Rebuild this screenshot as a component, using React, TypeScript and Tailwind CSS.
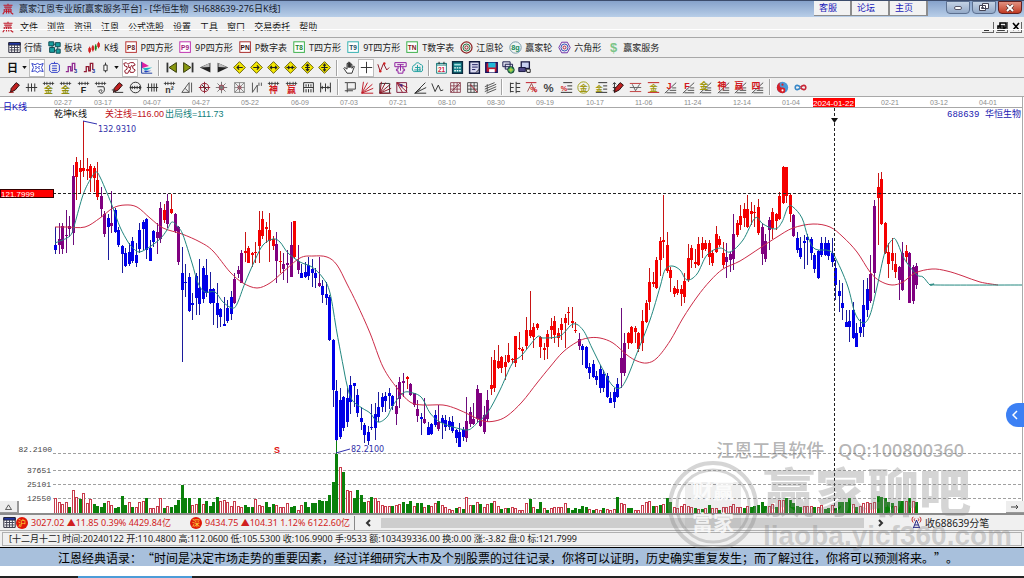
import type { ReactNode } from "react";

const SANS = "font-['Noto_Sans','Noto_Sans_CJK_SC',sans-serif]";

const CANDLES = `
b227,245,250,254 p223,239,245,254 p223,226,249,254 p210,235,236,253 p216,226,229,237 p165,176,233,245 r157,162,177,200 r160,168,172,193
r121,168,171,177 r158,169,171,180 r164,166,178,192 r166,168,178,192 r162,180,197,200 p187,196,209,217 p211,214,234,237 b214,218,227,260
p191,223,226,233 b208,210,232,233 b227,230,245,247 b245,246,254,273 b248,253,266,267 b243,252,264,266 b237,241,261,263 b243,255,263,267
b223,230,249,253 b220,222,229,250 b218,219,250,259 b240,248,261,261 b230,231,242,247 p223,232,238,254 p202,208,239,243 r204,210,220,223
p194,201,224,228 r194,209,213,214 p213,214,231,233 p226,227,262,265 b247,273,290,362 b264,282,283,297 b273,277,311,312 b293,303,305,320
b273,276,298,315 b259,288,304,315 b266,268,299,303 b259,275,293,297 b272,289,303,304 b288,289,303,325 b283,303,315,328 b308,309,317,327
b297,324,326,326 b300,308,321,323 b291,297,314,320 p273,279,303,304 p266,270,274,278 p250,253,283,283 r232,251,253,262 r246,248,263,263
r252,253,255,267 r242,252,253,263 r211,230,246,263 r211,219,236,239 r222,227,229,243 r213,230,241,262 r236,239,246,250 p232,244,261,283
r251,261,262,273 p253,264,269,280 p250,263,265,283 p222,245,277,277 r221,221,257,258 p245,261,270,274 b264,273,278,278 b262,272,277,278
b257,265,276,280 b259,269,273,287 b268,273,278,288 p257,283,286,287 b280,286,295,303 b282,294,298,305 b295,297,340,341 b339,340,390,407
b380,391,440,441 b388,400,437,439 b396,397,428,431 b388,398,422,427 b376,385,402,414 b383,383,386,407 b389,395,413,417 b407,418,422,430
b423,425,435,443 b426,432,441,445 b404,427,428,430 b403,414,428,440 b392,407,417,422 b393,397,407,412 b392,396,401,412 b388,393,396,409
b395,396,406,410 p385,406,414,425 p377,382,399,408 p373,381,383,397 r376,377,379,389 p383,384,395,396 p393,393,405,407 p400,409,416,422
b413,417,419,435 p398,419,423,424 b422,427,435,435 b423,424,434,435 b410,415,425,427 p405,422,429,431 b415,418,423,439 b415,420,427,431
b417,421,427,430 b416,422,431,433 b429,430,438,443 b423,432,447,447 b427,430,437,441 p397,421,438,442 p407,412,424,427 p403,419,424,425
p385,389,419,422 p393,393,426,427 p406,415,432,434 p390,400,419,422 r357,385,389,395 r350,360,388,392 r345,361,368,369 r356,357,368,373
r355,362,367,380 r343,355,362,363 r358,359,360,363 r336,336,363,367 r332,348,349,350 r347,349,351,360 r317,330,346,350 r291,330,336,338
r323,327,337,348 r323,324,328,330 r336,337,347,358 r343,348,350,360 r330,334,347,359 r318,326,330,339 r316,321,335,343 r328,333,338,347
r318,324,330,340 r314,318,323,348 r307,312,313,325 r307,321,323,328 r322,330,331,333 p333,339,346,350 b344,346,350,365 b346,347,368,369
b363,367,373,379 b360,364,377,378 b371,376,380,385 b365,369,388,393 b370,374,388,392 b373,376,397,398 b392,398,403,403 b388,392,402,408
b378,384,397,398 p308,358,373,388 p333,343,373,376 r332,333,343,349 r326,327,343,344 r326,328,332,343 r332,333,349,352 r310,321,343,351
r300,303,322,323 r268,282,302,310 r272,282,284,287 r257,260,288,289 r237,241,260,276 r195,240,242,258 r232,245,271,273 r267,270,278,292
r286,288,294,297 r280,289,293,295 r285,289,294,306 r273,281,297,303 r244,258,280,282 r245,248,260,268 r249,262,264,268 r237,244,265,266
r237,243,250,258 r240,243,249,251 r240,243,257,265 r250,253,263,266 r226,234,252,253 r236,239,245,247 r242,253,265,268 p243,257,262,278
p252,254,260,272 p214,234,259,270 r220,223,235,237 r205,216,225,230 r203,209,218,227 r195,209,227,228 r202,211,214,225 r205,212,213,227
r199,207,233,235 p223,227,254,265 p234,241,259,262 p217,220,230,250 r208,212,228,239 r213,214,221,230 r192,196,219,220 r166,167,203,204
r167,167,196,203 r194,195,214,222 p214,215,236,237 b232,238,250,253 b237,248,257,259 b235,241,243,269 b234,237,240,265 b237,239,253,260
b253,255,269,273 b250,251,278,279 b237,243,255,257 b237,243,255,256 b240,243,256,260 b238,253,262,267 b260,268,285,300 b280,291,296,312
b283,303,308,320 b310,322,327,327 b310,321,327,342 b302,310,338,339 b323,333,347,347 b319,327,333,337 b280,305,327,337 b278,289,310,317
p255,274,301,303 p200,206,273,293 r173,187,198,245 r172,179,224,225 r222,223,253,254 r243,252,264,278 r238,253,261,270 r253,264,272,278
p266,267,280,300 p242,253,290,291 r245,251,257,262 p252,253,303,303 p265,267,301,304 p263,266,285,289`;

const VOLUME = `
r15 r11 r9 r11 g6 r23 r16 g14 r20 r10 r14 g9 g7 g6 g10 r12 r8 g5 g6 g17 g8 r11 g6 r6 r11 r12 g15 r5 r5 r7 r15 g5 r7 g6 g8 g13 g28 g15 g15 r8
r9 g15 r9 g12 g7 g11 g16 r12 r13 r11 r7 r12 r7 r6 g8 g6 g6 r14 r8 r7 g11 g6 g9 r8 r6 r6 r10 g6 g7 r3 r8 g11 g6 g10 g10 g13 g12 g12 g18 g31
g59 r46 g41 r23 r22 g15 g23 g18 g11 r12 g16 r15 r12 r8 r7 r7 g7 r8 r9 g11 g9 g12 r7 g10 g10 r6 g8 r7 r10 g12 r8 r6 r4 r3 g5 r6 g4 r16 r8 g8
r11 g9 r6 r9 g10 r12 r7 g4 r5 g5 r6 r5 r3 r3 r10 g14 r6 g4 g11 r5 g3 r5 r6 r6 r6 r10 g5 g3 g5 g4 g7 g6 r4 g3 r4 r3 g5 r4 r3 r4
g16 r10 r9 g5 g5 r3 r3 r8 r11 r12 g7 r7 g8 r9 g15 g11 r6 r5 r7 r9 r7 r6 g5 r4 g4 r5 g8 r5 r5 g3 r6 r6 r7 r9 r6 r6 g5 r7 g6 g7
g8 g11 g7 r7 r9 g6 r13 r13 g15 g13 g10 g7 g6 r7 r7 r7 g6 r6 r8 g4 g5 r8 g5 g11 g11 g11 g15 r9 g6 r7 r10 r11 r10 r11 g17 g16 g15 g11 g10 r7
g12 g12 r12 g15 r12 g11`;

const SLOW_LINE =
  "55,227 67,227 85,227 100,218 113,208 125,205 137,207 150,218 163,228 182,234 200,242 213,251 230,272 243,283 257,288 270,283 283,272 300,258 313,256 327,257 337,265 347,284 357,304 370,333 383,367 397,388 410,402 423,405 443,405 457,409 470,415 483,421 495,421 507,416 522,402 537,383 550,367 563,352 577,342 588,338 600,338 613,343 627,355 637,361 647,363 657,358 670,341 683,318 697,297 710,281 723,269 740,261 760,248 777,237 793,228 813,224 830,227 843,237 857,252 870,272 880,281 892,285 903,282 915,273 932,269 947,271 963,276 980,282 998,285";
const FAST_LINE =
  "55,243 67,238 72,233 75,223 83,195 90,180 96,172 100,177 107,193 113,208 120,227 128,242 133,248 139,252 148,248 160,239 167,230 172,222 178,227 183,235 192,263 198,283 205,292 215,292 223,302 232,308 237,304 245,283 255,260 263,245 273,239 280,242 288,253 300,262 312,267 323,278 330,293 337,333 343,365 347,385 352,400 362,408 370,413 378,422 387,417 392,407 403,393 413,393 422,398 430,413 440,422 453,427 467,430 473,427 477,423 488,412 500,390 512,364 522,355 537,337 543,338 560,336 573,324 583,330 592,348 602,368 612,385 620,388 627,378 637,353 650,320 660,287 665,270 672,266 680,270 687,280 697,274 707,255 720,248 730,252 743,240 755,218 763,224 775,229 782,222 788,207 793,207 802,218 808,237 815,249 830,251 838,263 848,287 855,313 863,323 870,315 877,287 885,252 893,239 897,242 902,254 907,263 917,275 923,277 930,285 934,284 937,285 1022,285";

const DATES: [number, string][] = [
  [54, "02-27"], [94, "03-17"], [143, "04-07"], [192, "04-27"], [241, "05-22"], [291, "06-09"], [340, "07-03"],
  [389, "07-21"], [438, "08-10"], [487, "08-30"], [536, "09-19"], [586, "10-17"], [635, "11-06"], [684, "11-24"],
  [733, "12-14"], [782, "01-04"], [881, "02-21"], [930, "03-12"], [979, "04-01"],
];

const CANDLE_COLOR: Record<string, string> = { r: "#f50000", b: "#0000e8", p: "#800080" };
const WICK_COLOR: Record<string, string> = { r: "#c81414", b: "#1c1c9c", p: "#6c0c7c" };

const barX = (index: number) => Math.round(55 + index * 3.515);

function smooth(points: string) {
  const p = points.split(" ").map((pair) => pair.split(",").map(Number));
  let d = `M${p[0][0]} ${p[0][1]}`;
  for (let i = 0; i < p.length - 1; i++) {
    const a = p[i - 1] ?? p[i];
    const b = p[i];
    const c = p[i + 1];
    const e = p[i + 2] ?? c;
    d += `C${b[0] + (c[0] - a[0]) / 6} ${b[1] + (c[1] - a[1]) / 6} ${c[0] - (e[0] - b[0]) / 6} ${c[1] - (e[1] - b[1]) / 6} ${c[0]} ${c[1]}`;
  }
  return d;
}

function Chart() {
  return (
    <svg viewBox="0 97 1024 416" className="block h-auto w-full bg-white" role="img" aria-label="华恒生物 日K线">
      <path d="M0 107.5H1022" stroke="#a8a8a8" />
      <g fill="#8c8c8c" className="font-['Liberation_Sans',sans-serif] text-[7px]">
        {DATES.map(([x, label]) => (
          <text key={label} x={x} y="105">{label}</text>
        ))}
      </g>
      <g stroke="#a0a0a0" strokeDasharray="3 2" shapeRendering="crispEdges">
        <path d="M53 453.5H1022M53 470.5H1022M53 484.5H1022M53 498.5H1022" />
      </g>

      <g shapeRendering="crispEdges">
        {VOLUME.trim().split(/\s+/).map((bar, i) => {
          const h = Number(bar.slice(1));
          return bar[0] === "g" ? (
            <rect key={i} x={barX(i) - 1} y={513 - h} width="3" height={h} fill="#0a800a" />
          ) : (
            <rect key={i} x={barX(i) - 0.5} y={513.5 - h} width="2" height={h} fill="#fff" stroke="#c83c4c" />
          );
        })}
        {CANDLES.trim().split(/\s+/).map((candle, i) => {
          const [high, top, bottom, low] = candle.slice(1).split(",").map(Number);
          const x = barX(i);
          return (
            <g key={i}>
              <rect x={x} y={high} width="1" height={low - high} fill={WICK_COLOR[candle[0]]} />
              <rect x={x - 1} y={top} width="3" height={Math.max(1, bottom - top)} fill={CANDLE_COLOR[candle[0]]} />
            </g>
          );
        })}
        <path d="M336.5 441V454" stroke="#0a800a" />
      </g>
      <path d={smooth(SLOW_LINE)} fill="none" stroke="#cc2c48" />
      <path d={smooth(FAST_LINE)} fill="none" stroke="#22877f" />

      <path d="M53 193.5H1022M834.5 108V513" stroke="#222" strokeDasharray="3 2" shapeRendering="crispEdges" />
      <path d="M831 118h7l-3.500 5z" fill="#111" />
      <rect x="813" y="98" width="42" height="9" fill="#f00" />
      <rect x="0.500" y="189.500" width="53" height="8" fill="#f00" stroke="#300" />
      <path d="M83 121l14 3M336 453l14-4" stroke="#3030b0" fill="none" />

      <g fill="#fff" className="font-['Liberation_Sans',sans-serif] text-[8px]">
        <text x="813" y="106">2024-01-22</text>
        <text x="1" y="197">121.7999</text>
      </g>
      <g fill="#3030a8" className="font-['DejaVu_Sans',sans-serif] text-[8px]">
        <text x="98" y="132">132.9310</text>
        <text x="351" y="452">82.2100</text>
      </g>
      <g fill="#444" textAnchor="end" className="font-['Liberation_Mono',monospace] text-[8px]">
        <text x="52" y="452">82.2100</text>
        <text x="51" y="473">37651</text>
        <text x="51" y="487">25101</text>
        <text x="51" y="501">12550</text>
      </g>
      <g className="font-['Liberation_Sans','Noto_Sans_CJK_SC',sans-serif] text-[9px]">
        <text x="3" y="110" fill="#1010c0">日K线</text>
        <text x="54" y="117" fill="#111">乾坤K线</text>
        <text x="105" y="117" fill="#c01020">关注线=116.00</text>
        <text x="165" y="117" fill="#10807c">出局线=111.73</text>
        <text x="274" y="453" fill="#e01010" fontWeight="bold">S</text>
      </g>
      <g fill="#2020b0" className="font-['Liberation_Mono','Noto_Sans_CJK_SC',monospace] text-[9px]">
        <text x="947" y="117">688639</text>
        <text x="985" y="117">华恒生物</text>
      </g>
      <path d="M1022.500 97V513" stroke="#aaa" />
    </svg>
  );
}

function Glyph({ children }: { children: ReactNode }) {
  return (
    <svg viewBox="0 0 16 16" className="h-[13px] w-[13px] shrink-0" fill="none" stroke="#333" strokeWidth="1.200" aria-hidden="true">
      {children}
    </svg>
  );
}

function Char({ x = 8, y, size = 9, fill, children }: { x?: number; y: number; size?: number; fill: string; children: string }) {
  return (
    <text x={x} y={y} fontSize={size} fill={fill} stroke="none" fontWeight="bold" textAnchor="middle" fontFamily="'Liberation Sans','Noto Sans CJK SC',sans-serif">
      {children}
    </text>
  );
}

function Logo() {
  return (
    <svg viewBox="0 0 16 16" className="h-[12px] w-[12px] shrink-0" fill="none" stroke="#c01828" strokeWidth="1.500" aria-hidden="true">
      <path d="M2 3h12M8 1v2M3 5.500h10M4 8h8M3 8v4l-2 3M6 8v6M9 8v6M12 8v5l3 2M4 11h8" />
    </svg>
  );
}

function Boxed({ label, color, ink }: { label: string; color: string; ink: string }) {
  return (
    <Glyph>
      <rect x="1" y="1" width="13" height="13" stroke={color} fill="#fff" />
      <Char x={7.5} y={11} size={8} fill={ink}>{label}</Char>
    </Glyph>
  );
}

const TableIcon = (
  <Glyph>
    <path d="M1 2h14v12H1z" fill="#fff" stroke="#223" />
    <path d="M1 2h14v3H1z" fill="#2038b0" stroke="#223" />
    <path d="M2 8h12M2 11h12M4.500 5v9M8 5v9M11.500 5v9" stroke="#445" />
  </Glyph>
);

const FEATURES: { label: string; icon: ReactNode }[] = [
  { label: "行情", icon: TableIcon },
  {
    label: "板块",
    icon: (
      <Glyph>
        <path d="M1 1h6v5H1zM9 2h6v5H9zM2 8h6v6H2zM10 10h5v5h-5z" fill="#18a0a0" stroke="#114c54" />
        <path d="M7 4h3M12 7v3M5 6v3M8 12h2" stroke="#114c54" />
      </Glyph>
    ),
  },
  {
    label: "K线",
    icon: (
      <Glyph>
        <path d="M2 7v8M6 5v8M13 1v8" stroke="#d02020" />
        <path d="M9.500 4v8" stroke="#188018" />
        <path d="M1 9h2v4H1zM5 7h2v4H5zM12 3h2v4h-2z" fill="#e02020" stroke="#d02020" />
        <path d="M9 6h1v4H9z" fill="#20a020" stroke="#188018" />
      </Glyph>
    ),
  },
  { label: "P四方形", icon: <Boxed label="P8" color="#b83030" ink="#602020" /> },
  { label: "9P四方形", icon: <Boxed label="P9" color="#c030b0" ink="#a02080" /> },
  { label: "P数字表", icon: <Boxed label="PN" color="#a82828" ink="#301010" /> },
  { label: "T四方形", icon: <Boxed label="T8" color="#38b048" ink="#208030" /> },
  { label: "9T四方形", icon: <Boxed label="T9" color="#30b0b0" ink="#204c60" /> },
  { label: "T数字表", icon: <Boxed label="TN" color="#38b048" ink="#801818" /> },
  {
    label: "江恩轮",
    icon: (
      <Glyph>
        <circle cx="8" cy="8" r="6.800" stroke="#8c2020" strokeWidth="1.500" />
        <circle cx="8" cy="8" r="4.300" stroke="#207040" />
        <circle cx="8" cy="8" r="2" stroke="#902020" />
      </Glyph>
    ),
  },
  {
    label: "赢家轮",
    icon: (
      <Glyph>
        <circle cx="8" cy="8" r="7" stroke="#7898a8" fill="#eef6f4" />
        <Char y={11} size={9} fill="#188858">8g</Char>
      </Glyph>
    ),
  },
  {
    label: "六角形",
    icon: (
      <Glyph>
        <path d="M4.500 1.500h7L15 8l-3.500 6.500h-7L1 8z" stroke="#7030a8" />
        <circle cx="8" cy="8" r="4.300" stroke="#3050b8" />
        <circle cx="8" cy="8" r="1.800" stroke="#b02040" />
      </Glyph>
    ),
  },
  { label: "赢家服务", icon: <Glyph><Char y={14} size={16} fill="#7cc488">$</Char></Glyph> },
];

const candleBars = (tone: string) => (
  <Glyph>
    <path d="M1 13h3V7h3v5h2V3h3v8" stroke={tone} strokeWidth="1.600" />
    <Char x={13} y={15} size={7} fill="#203090">3</Char>
  </Glyph>
);

const diamond = (arrows: string) => (
  <Glyph>
    <path d="M8 .8L15.200 8 8 15.200.8 8z" fill="#f4e800" stroke="#686000" />
    <path d={arrows} stroke="#222" strokeWidth="1.400" />
  </Glyph>
);

const CALENDAR_TOOLS: { name: string; icon: ReactNode; on?: boolean }[] = [
  { name: "图形一", on: true, icon: <Glyph><path d="M1 3l4 1.500L8 3l3 1.500L15 3l-2 5 2 5-4-1-3 2-3-2-4 1 2-5z" stroke="#3040c8" /><path d="M5 7h2M9 7h2M5 10l3-2 3 2" stroke="#3040c8" /></Glyph> },
  { name: "图形二", icon: <Glyph><path d="M4 3h8l2 2v7l-2 2H4l-2-2V5zM5 6h6M5 9h6M5 11.500h6M8 1v2" stroke="#3040c8" /></Glyph> },
  { name: "分段三", icon: candleBars("#902890") },
  { name: "分段四", icon: candleBars("#901830") },
];

const SHAPE_TOOLS: { name: string; icon: ReactNode; on?: boolean }[] = [
  { name: "缺口", on: true, icon: <Glyph><path d="M1 3l3-1 2 2 3-2h4l2 3-3 1v3l3 2-2 3h-4l-1-3-2 4H3l-1-3 3-2V7L2 6z" stroke="#901828" /><path d="M7 5v3h2v3M11 5l-2 3" stroke="#901828" /></Glyph> },
  { name: "旗形", icon: <Glyph><path d="M2 1l9 5-9 3z" fill="#e020a0" stroke="none" /><path d="M3 9l12-1-8 4z" fill="#20b0c0" stroke="none" /><path d="M2 1v14h13" stroke="#2040a0" /><path d="M4 12l10 0-7 2z" fill="#2040c0" stroke="none" /></Glyph> },
];

const NAV_TOOLS: { name: string; icon: ReactNode }[] = [
  { name: "最前", icon: <Glyph><path d="M14 2v12L5 8z" fill="#889810" stroke="#333808" /><path d="M3 2v12" strokeWidth="2.200" /></Glyph> },
  { name: "最后", icon: <Glyph><path d="M2 2v12l9-6z" fill="#889810" stroke="#333808" /><path d="M13 2v12" strokeWidth="2.200" /></Glyph> },
  { name: "向前", icon: <Glyph><path d="M14 2v12L1 8z" fill="#222" stroke="none" /><path d="M13 2.500v5L2 8z" fill="#bbb" stroke="none" /></Glyph> },
  { name: "向后", icon: <Glyph><path d="M2 2v12l13-6z" fill="#222" stroke="none" /><path d="M3 2.500v5l11 .5z" fill="#bbb" stroke="none" /></Glyph> },
  { name: "左移", icon: diamond("M12 8H5M7.500 5.500L5 8l2.500 2.500") },
  { name: "右移", icon: diamond("M4 8h7M8.500 5.500L11 8l-2.500 2.500") },
  { name: "缩小", icon: diamond("M4 8h8M6 6L4 8l2 2M10 6l2 2-2 2") },
  { name: "放大", icon: diamond("M3 8h10M5 6l2 2-2 2M11 6L9 8l2 2") },
  { name: "纵缩", icon: diamond("M8 4v8M6 6l2-2 2 2M6 10l2 2 2-2M5 8h6") },
  { name: "纵放", icon: diamond("M8 3v10M4 8h8M6 5h4M6 11h4") },
];

const POINTER_TOOLS: { name: string; icon: ReactNode; on?: boolean }[] = [
  { name: "手形", icon: <Glyph><path d="M5 15l-4-6 1-1 3 2V3h1.500v5V1.500H8V8 2.500h1.500V8 4H11v5l2-3 1 1-2 5-1 3z" fill="#fff" /></Glyph> },
  { name: "十字", on: true, icon: <Glyph><path d="M8 1v14M1 8h14" /></Glyph> },
  { name: "折线", icon: <Glyph><path d="M1 4l3 9 4-10 4 8 3-3" stroke="#901828" /><circle cx="4" cy="12.500" r="1.500" fill="#d02020" stroke="none" /><circle cx="9" cy="3" r="1.500" fill="#d02020" stroke="none" /></Glyph> },
  { name: "标记", icon: <Glyph><path d="M1 2h14v5H1zM5 7v3H3v2h2v3h6v-3h2v-2h-2V7M4 4.500h8M8 4.500V12" stroke="#9020a0" /></Glyph> },
  { name: "云图", icon: <Glyph><path d="M2 8c0-3 2-3 3-3 0-3 5-4 6-1 3 0 4 3 3 5 1 3-1 5-3 4H4c-2 0-3-3-2-5zM5 8h6M8 5v8M4 11h8M11 7v5" stroke="#20a0a0" /></Glyph> },
];

const SYSTEM_TOOLS: { name: string; icon: ReactNode }[] = [
  { name: "日历", icon: <Glyph><path d="M2 3h12v12H2z" fill="#fff" stroke="#208080" /><path d="M2 3h12v2H2z" stroke="#208080" /><path d="M5 1v3M11 1v3" stroke="#222" /><Char y={13} size={8} fill="#d02040">21</Char></Glyph> },
  { name: "计算器", icon: <Glyph><path d="M2 1h12v14H2z" fill="#108088" stroke="#0c2c40" strokeWidth="1.800" /><path d="M4 3.500h8v2H4z" fill="#a8e0e0" stroke="none" /><path d="M4 8.500h8M4 12h8" stroke="#fff" strokeDasharray="2 1" strokeWidth="1.600" /></Glyph> },
  { name: "记事", icon: <Glyph><path d="M2 1h12v14H2z" fill="#d8d8f0" stroke="#101840" strokeWidth="1.800" /><path d="M5 4.500h7M5 7.500h7M5 10.500h4" stroke="#202060" /><path d="M10 14l4-4" stroke="#222" /></Glyph> },
  { name: "保存", icon: <Glyph><path d="M1 2h14v12H1z" fill="#c01830" stroke="#101060" strokeWidth="1.800" /><path d="M4 2h9v6H4z" fill="#20b8d8" stroke="none" /><path d="M5 10h7v4H5z" fill="#fff" stroke="none" /></Glyph> },
  { name: "网络", icon: <Glyph><path d="M1 1h9v6H1zM4 4h9v6H4z" fill="#e0e0f0" stroke="#202050" /><circle cx="11" cy="11" r="4" fill="#30a060" stroke="#123c30" /><path d="M8 11h6M11 8v6" stroke="#e0e040" /></Glyph> },
  { name: "打印", icon: <Glyph><path d="M4 1h10v8H4z" fill="#c8d0f0" stroke="#181840" strokeWidth="1.600" /><path d="M1 8h8v5H1z" fill="#504888" stroke="#181840" /><path d="M10 10h5v4h-4z" fill="#eee" stroke="#222" /></Glyph> },
];

const combTop = <path d="M1 3h14M3 1v4M6 1v4M10 1v4M13 1v4" strokeWidth="1" />;
const pen = <path d="M4 9l6-7 4 3-5 6-6 3z" fill="#c02020" stroke="#281010" />;
const combChar = (c: string, fill: string) => (
  <Glyph>
    {combTop}
    <Char y={15} size={11} fill={fill}>{c}</Char>
  </Glyph>
);
const fan = (tone: string) => <path d="M1 15L3 1M1 15L8 2M1 15L14 4M1 15L15 9M1 15h14" stroke={tone} />;
const slopes = (c: string, fill: string) => (
  <Glyph>
    <path d="M1 15L15 2M3 14.500h12M7 11.500h8M10 8.500h5" strokeWidth="1" />
    <Char x={6} y={10} size={11} fill={fill}>{c}</Char>
  </Glyph>
);

const LINE_TOOLS: ReactNode[] = [
  <Glyph>{pen}<path d="M1 14h6" stroke="#a02020" /></Glyph>,
  <Glyph><path d="M1 8h14M4 3v10M8 3v10M12 3v10" /></Glyph>,
  combChar("金", "#909010"),
  combChar("金", "#909010"),
  combChar("F", "#222"),
  <Glyph>{combTop}<path d="M4 7h8c2 4 0 8-3 8s-4-4-1-4 2 2 1 2" /></Glyph>,
  <Glyph>{pen}<path d="M1 11h4v3h10" /></Glyph>,
  <Glyph><circle cx="8" cy="8" r="6.500" /><path d="M1 8h14M4 6v4M7 6v4M10 6v4M13 6v4" /></Glyph>,
  <Glyph><path d="M1 8h14M3 3v10M7 3v10M10 3v10M13 3v10" /></Glyph>,
  combChar("n²", "#333"),
  <Glyph><path d="M1 14L10 2v12zM5 9l5 5M13 2v12" stroke="#555" /></Glyph>,
  <Glyph><circle cx="8" cy="8" r="5" stroke="#902030" /><path d="M8 1v14M1 8h14" stroke="#902030" /><path d="M5 5l6 6" /></Glyph>,
  <Glyph><path d="M8 1v14M1 8h14M3 3l10 10M13 3L3 13" stroke="#777" /><circle cx="8" cy="8" r="3" stroke="#a04050" /></Glyph>,
  <Glyph><path d="M2 2h12v12H2zM2 2l12 12M14 2L2 14M8 2v12M2 8h12" stroke="#777" strokeWidth="1" /><circle cx="8" cy="8" r="2" stroke="#a04050" /></Glyph>,
  <Glyph><path d="M3 2v12l6-9v9M11 2v4M14 2v4" stroke="#555" /></Glyph>,
  combChar("神", "#d01820"),
  combChar("赢", "#d01820"),
  <Glyph><path d="M2 2h12M2 2v12M14 2v12M2 8h12M5 4v3M8 4v3M11 4v3M5 10v4M8 10v4M11 10v4" /></Glyph>,
  <Glyph><path d="M2 2v12M14 2v12M8 3v10M2 8h12M4 6v4M11 6v4" /></Glyph>,
];

const ANGLE_TOOLS: ReactNode[] = [
  <Glyph><path d="M4 2h10v8H4zM1 2h3M4 10v4M1 12h10" stroke="#444" /></Glyph>,
  <Glyph>{fan("#c01c28")}</Glyph>,
  <Glyph><path d="M1 3h12v12H1z" />{fan("#901828")}</Glyph>,
  <Glyph><path d="M1 2h12v12H1z" stroke="#802040" /><path d="M1 2l13 12M1 2l7 12M1 2l13 6" stroke="#a02030" /><path d="M3 4h5v4z" fill="#402080" stroke="none" /></Glyph>,
  <Glyph><path d="M1 15L14 2M1 15L15 8M1 15h14M1 15L8 9" /></Glyph>,
  <Glyph><path d="M1 3l4 10 4-8 3 7 3-1" /></Glyph>,
  <Glyph><path d="M2 2h12v12H2zM2 6h12M2 10h12M6 2v12M10 2v12M2 14L14 2" stroke="#803040" strokeWidth="1" /></Glyph>,
  <Glyph><path d="M2 2h12v12H2zM2 6h12M2 10h12M6 2v12M10 2v12" strokeWidth="1" /><path d="M5 4l9 10" stroke="#b02030" /></Glyph>,
  <Glyph><path d="M1 7l12-5M1 10l14-6M1 13l14-6M3 15l12-5M4 4v9" stroke="#555" /></Glyph>,
];

const LEVEL_TOOLS: ReactNode[] = [
  <Glyph><path d="M3 2v12M3 3h4M3 8h4M3 13h4M10 3h5M10 8h5M10 13h5M10 1v14" /></Glyph>,
  <Glyph><path d="M1 2h13" stroke="#c01c28" /><path d="M3 13L8 3l5 11" stroke="#a05050" /><Char x={11} y={13} size={10} fill="#d01820">%</Char></Glyph>,
  <Glyph><Char y={13} size={14} fill="#444">%</Char></Glyph>,
  <Glyph><path d="M4 2h11M9 6h6M9 10h6M1 14h14" /><Char x={5} y={12} size={9} fill="#d01820">%</Char></Glyph>,
  <Glyph><circle cx="8" cy="8" r="7" stroke="#a0a020" /><Char y={12} size={10} fill="#a09810">金</Char></Glyph>,
  <Glyph><path d="M4 2h11M10 6h5M10 10h5M1 14h14" /><Char x={5} y={12} size={9} fill="#a09810">金</Char></Glyph>,
  <Glyph><path d="M3 2v12M1 4l2-2 2 2M1 8h4M1 12h4" />{pen}</Glyph>,
  <Glyph><path d="M1 3h14M1 13h14" stroke="#c04040" /><path d="M1 8h14M4 4l4 8 5-8" stroke="#666" /></Glyph>,
  <Glyph><path d="M1 2h14M1 14h14" stroke="#c02020" /><Char y={12} size={10} fill="#a09810">金</Char></Glyph>,
  slopes("J", "#d01820"),
  slopes("F", "#d01820"),
  slopes("金", "#a09810"),
  slopes("神", "#d01820"),
  slopes("赢", "#d01820"),
  slopes("四", "#d01820"),
];

const CYCLE_TOOLS: ReactNode[] = [
  <Glyph><circle cx="8" cy="8" r="7" fill="#4898d8" stroke="none" /><path d="M8 1a7 7 0 0 0 0 14 3.500 3.500 0 0 0 0-7 3.500 3.500 0 0 1 0-7z" fill="#d82028" stroke="none" /><circle cx="8" cy="4.500" r="1.300" fill="#d82028" stroke="none" /><circle cx="8" cy="11.500" r="1.300" fill="#fff" stroke="none" /></Glyph>,
  <Glyph><path d="M8 8C6 5 1.500 4 1.500 8S6 11 8 8" stroke="#3888c8" strokeWidth="2" /><path d="M8 8c2-3 6.500-4 6.500 0S10 11 8 8" stroke="#c82838" strokeWidth="2" /></Glyph>,
];

function ToolButton({ name, on, children }: { name: string; on?: boolean; children: ReactNode }) {
  return (
    <button
      type="button"
      aria-label={name}
      className={on ? "flex h-4 w-[14px] items-center justify-center bg-white outline outline-[#bdbdbd]" : "flex h-4 w-[14px] items-center justify-center"}
    >
      {children}
    </button>
  );
}

function DrawGroup({ title, tools, width }: { title: string; tools: ReactNode[]; width: string }) {
  return (
    <div className={`flex justify-between ${width}`}>
      {tools.map((icon, index) => (
        <ToolButton key={index} name={`${title}${index + 1}`}>{icon}</ToolButton>
      ))}
    </div>
  );
}

const Separator = () => <span className="mx-1 h-4 w-[2px] border-l border-[#a4a4a4] bg-white" />;

const Caret = () => (
  <svg viewBox="0 0 6 4" className="h-[3px] w-[5px]" aria-hidden="true">
    <path d="M0 0h6L3 4z" fill="#111" />
  </svg>
);

const MENUS = ["文件", "浏览", "资讯", "江恩", "公式选股", "设置", "工具", "窗口", "交易委托", "帮助"];

function TitleBar() {
  return (
    <header className="flex h-[17px] items-start border-t border-[#3c4c6c] bg-linear-to-b from-[#86a2cb] to-[#b8cee8] pr-[2px] pl-[2px]">
      <div className="flex h-4 items-center gap-[5px]">
        <Logo />
        <h1 className="text-[9px] leading-[16px] whitespace-pre text-[#16202c]">赢家江恩专业版[赢家服务平台] - [华恒生物  SH688639-276日K线]</h1>
      </div>
      <nav className="mr-[18px] ml-auto flex">
        {["客服", "论坛", "主页"].map((label) => (
          <a key={label} href="#" className="h-[15px] w-[38px] border-r-2 border-b border-[#8c8c8c] bg-[#f2f2f2] pl-[5px] text-[9px] leading-[14px] text-[#1818b8]">
            {label}
          </a>
        ))}
      </nav>
      <div className="flex gap-[2px] text-white">
        <button type="button" aria-label="最小化" className="flex h-[13px] w-6 items-center justify-center rounded-b-sm border border-[#5c7090] bg-linear-to-b from-[#c4d2e4] to-[#94aac8]">
          <span className="h-1 w-2 rounded-xs border border-[#556] bg-white" />
        </button>
        <button type="button" aria-label="还原" className="flex h-[13px] w-6 items-center justify-center rounded-b-sm border border-[#5c7090] bg-linear-to-b from-[#c4d2e4] to-[#94aac8]">
          <svg viewBox="0 0 10 9" className="h-[9px] w-[10px]" fill="#fff" stroke="#445" aria-hidden="true">
            <path d="M3.500.5h6v5h-6zM.5 2.500h6v5h-6zM2.500 4.500h2v1h-2z" />
          </svg>
        </button>
        <button type="button" aria-label="关闭" className="flex h-[13px] w-6 items-center justify-center rounded-b-sm border border-[#602020] bg-linear-to-b from-[#e09080] to-[#c03820]">
          <svg viewBox="0 0 10 8" className="h-2 w-[10px]" aria-hidden="true">
            <path d="M2 1l6 6M8 1L2 7" stroke="#503030" strokeWidth="3.200" />
            <path d="M2 1l6 6M8 1L2 7" stroke="#fff" strokeWidth="2" />
          </svg>
        </button>
      </div>
    </header>
  );
}

function MenuBar() {
  return (
    <div className="relative flex h-[21px] items-center border-b border-[#a8a8a8] pr-[2px] pl-[2px]">
      <Logo />
      <nav className="ml-[6px] flex gap-[9px]">
        {MENUS.map((menu) => (
          <button key={menu} type="button" className="text-[9px] leading-[16px]">{menu}</button>
        ))}
      </nav>
      <div className="ml-auto flex items-center gap-[2px]">
        {["M1 8h5", "M3 1h6v5H3zM1 4h6v4H1z", "M2 1l6 7M8 1L2 8"].map((d) => (
          <button key={d} type="button" aria-label="子窗口" className="flex h-[11px] w-3 items-center justify-center border-r border-b border-[#666] bg-[#f0f0f0]">
            <svg viewBox="0 0 10 9" className="h-[9px] w-[10px]" fill="none" stroke="#000" strokeWidth="1.600" aria-hidden="true">
              <path d={d} />
            </svg>
          </button>
        ))}
      </div>
      <span className="absolute inset-x-0 top-3 h-px bg-white" />
    </div>
  );
}

function Toolbars() {
  return (
    <>
      <div className="flex h-5 items-center gap-[6px] border-b border-[#a8a8a8] pl-2">
        {FEATURES.map(({ label, icon }) => (
          <button key={label} type="button" className="flex items-center gap-[3px] text-[9px] leading-[16px] whitespace-nowrap text-[#222]">
            {icon}
            {label}
          </button>
        ))}
      </div>
      <div className="flex h-5 items-center border-b border-[#a8a8a8] pl-[7px]">
        <div className="flex w-[147px] justify-between">
          <button type="button" className="flex w-5 items-center justify-between text-[11px] leading-[16px] font-bold">
            日<Caret />
          </button>
          {CALENDAR_TOOLS.map((tool) => (
            <ToolButton key={tool.name} name={tool.name} on={tool.on}>{tool.icon}</ToolButton>
          ))}
          <button type="button" aria-label="K线样式" className="flex w-5 items-center justify-between">
            <Glyph><path d="M8 2v12" /><path d="M6 5h4v7H6z" fill="#fff" /></Glyph>
            <Caret />
          </button>
          {SHAPE_TOOLS.map((tool) => (
            <ToolButton key={tool.name} name={tool.name} on={tool.on}>{tool.icon}</ToolButton>
          ))}
        </div>
        <Separator />
        <div className="flex w-[168px] justify-between">
          {NAV_TOOLS.map((tool) => (
            <ToolButton key={tool.name} name={tool.name}>{tool.icon}</ToolButton>
          ))}
        </div>
        <Separator />
        <div className="flex w-[82px] justify-between">
          {POINTER_TOOLS.map((tool) => (
            <ToolButton key={tool.name} name={tool.name} on={tool.on}>{tool.icon}</ToolButton>
          ))}
        </div>
        <Separator />
        <div className="flex w-[98px] justify-between">
          {SYSTEM_TOOLS.map((tool) => (
            <ToolButton key={tool.name} name={tool.name}>{tool.icon}</ToolButton>
          ))}
        </div>
      </div>
      <div className="flex h-[19px] items-center border-b border-[#a8a8a8] pl-[7px]">
        <DrawGroup title="画线" tools={LINE_TOOLS} width="w-[326px]" />
        <Separator />
        <DrawGroup title="角度" tools={ANGLE_TOOLS} width="w-[154px]" />
        <Separator />
        <DrawGroup title="分割" tools={LEVEL_TOOLS} width="w-[258px]" />
        <Separator />
        <DrawGroup title="周期" tools={CYCLE_TOOLS} width="w-[32px]" />
      </div>
    </>
  );
}

function IndexBadge({ children }: { children: string }) {
  return <span className="h-3 w-3 shrink-0 rounded-full bg-[#e01808] text-center text-[8px] leading-[12px] text-[#ffe040]">{children}</span>;
}

function Ticker() {
  return (
    <div className="flex h-[18px] items-center border-t-2 border-b border-t-[#8c8c8c] border-b-[#b0b0b0] text-[9px] leading-[14px] text-[#d02020]">
      <div className="flex w-[355px] items-center overflow-hidden border-r border-[#888] pl-[3px] whitespace-nowrap">
        {TableIcon}
        <div className="flex w-[174px] shrink-0 items-center gap-[3px]">
          <IndexBadge>沪</IndexBadge>
          <span>3027.02 ▲11.85 0.39% 4429.84亿</span>
        </div>
        <div className="flex items-center gap-[3px]">
          <IndexBadge>深</IndexBadge>
          <span>9434.75 ▲104.31 1.12% 6122.60亿</span>
        </div>
      </div>
      <div className="flex h-full flex-1 items-center text-[#333]">
        <button type="button" aria-label="向左滚动" className="flex w-[26px] justify-center">
          <svg viewBox="0 0 6 8" className="h-2 w-[6px]" fill="none" stroke="#333" strokeWidth="2" aria-hidden="true"><path d="M5 1L2 4l3 3" /></svg>
        </button>
        <div className="h-[10px] flex-1 bg-[#cdcdcd]" />
        <button type="button" aria-label="向右滚动" className="flex w-[46px] justify-start pl-[14px]">
          <svg viewBox="0 0 6 8" className="h-2 w-[6px]" fill="none" stroke="#333" strokeWidth="2" aria-hidden="true"><path d="M1 1l3 3-3 3" /></svg>
        </button>
      </div>
      <div className="flex w-[114px] items-center gap-[2px] text-[#222]">
        <Glyph>
          <path d="M8 5L4 15M8 5l4 10M6 11h4M5 14h6" stroke="#202080" />
          <path d="M4 1C2 3 2 6 4 8M12 1c2 2 2 5 0 7M6 3c-1 1-1 2 0 3M10 3c1 1 1 2 0 3" stroke="#c02020" />
        </Glyph>
        <span className="text-[10px]">收688639分笔</span>
      </div>
    </div>
  );
}

function Watermark() {
  return (
    <div aria-hidden="true" className="pointer-events-none absolute right-[12px] bottom-[14px] flex flex-col items-end text-[#888]/35 select-none">
      <p className="mr-[48px] text-[18px] leading-[20px] font-medium whitespace-pre text-[#777]/55">江恩工具软件   QQ:100800360</p>
      <div className="flex items-end gap-1">
        <svg viewBox="0 0 92 92" className="h-[92px] w-[92px]" fill="none" stroke="currentColor">
          <circle cx="46" cy="46" r="43" strokeWidth="4" />
          <circle cx="46" cy="46" r="36" strokeWidth="3" />
          <path d="M18 22h56v48H18z" fill="currentColor" fillOpacity="0.400" stroke="none" />
          <g fill="#fff" fillOpacity="0.800" stroke="none" fontSize="21" fontWeight="bold" textAnchor="middle" fontFamily="'Noto Sans CJK SC',sans-serif">
            <text x="46" y="38">财赢</text>
            <text x="46" y="70">富家</text>
          </g>
        </svg>
        <div>
          <p className="text-[52px] leading-[56px] font-black">赢家聊吧</p>
          <p className="font-['Liberation_Sans',sans-serif] text-[28px] leading-[32px] font-bold">liaoba.yicf360.com</p>
        </div>
      </div>
    </div>
  );
}

export default function App() {
  return (
    <div className={`flex w-full flex-col bg-white text-[#111] ${SANS}`}>
      <div className="relative bg-[#f0f0f0]">
        <TitleBar />
        <MenuBar />
        <Toolbars />
        <main className="relative">
          <Chart />
          <button type="button" aria-label="展开" className="absolute bottom-0 left-0 flex h-3 w-[19px] items-center justify-center border-r-2 border-b border-[#999] bg-[#eee]">
            <svg viewBox="0 0 8 7" className="h-[6px] w-[7px]" fill="none" stroke="#444" aria-hidden="true"><path d="M4 1L7.500 6.500h-7z" /></svg>
          </button>
          <button type="button" aria-label="右移" className="absolute right-0 bottom-0 flex h-3 w-[18px] items-center justify-center border-b border-[#999] bg-[#eee]">
            <svg viewBox="0 0 8 6" className="h-[6px] w-2" fill="none" stroke="#444" aria-hidden="true"><path d="M0 3h7M5 1l2 2-2 2" /></svg>
          </button>
          <button type="button" aria-label="侧栏" className="absolute right-0 bottom-[86px] flex h-6 w-[18px] items-center justify-center rounded-l-full bg-[#3c80f4]">
            <svg viewBox="0 0 6 10" className="h-[10px] w-[6px]" fill="none" stroke="#fff" strokeWidth="1.500" aria-hidden="true"><path d="M5 1L1 5l4 4" /></svg>
          </button>
        </main>
        <Ticker />
        <div className="mx-[2px] my-px flex h-[14px] items-center border border-[#b0b0b0] pl-[6px] text-[9px] leading-[12px] whitespace-nowrap text-[#222]">
          [十二月十二] 时间:20240122 开:110.4800 高:112.0600 低:105.5300 收:106.9900 手:9533 额:103439336.00 换:0.00 涨:-3.82 盘:0 标:121.7999
        </div>
        <div className="h-[19px] overflow-hidden border-t border-black bg-[#a8c0dc] pl-[58px] font-['Noto_Sans_CJK_SC',sans-serif] text-[12px] leading-[19px] whitespace-nowrap text-black [text-spacing-trim:space-all]">
          江恩经典语录：“时间是决定市场走势的重要因素，经过详细研究大市及个别股票的过往记录，你将可以证明，历史确实重复发生；而了解过往，你将可以预测将来。”。
        </div>
        <Watermark />
      </div>
      <div className="flex h-3 items-end bg-white">
        <span className="h-[2px] w-[78px] bg-[#222]" />
        <span className="h-[2px] w-[114px] bg-[#4c9cd8]" />
        <span className="h-[2px] flex-1 bg-[#222]" />
      </div>
    </div>
  );
}
